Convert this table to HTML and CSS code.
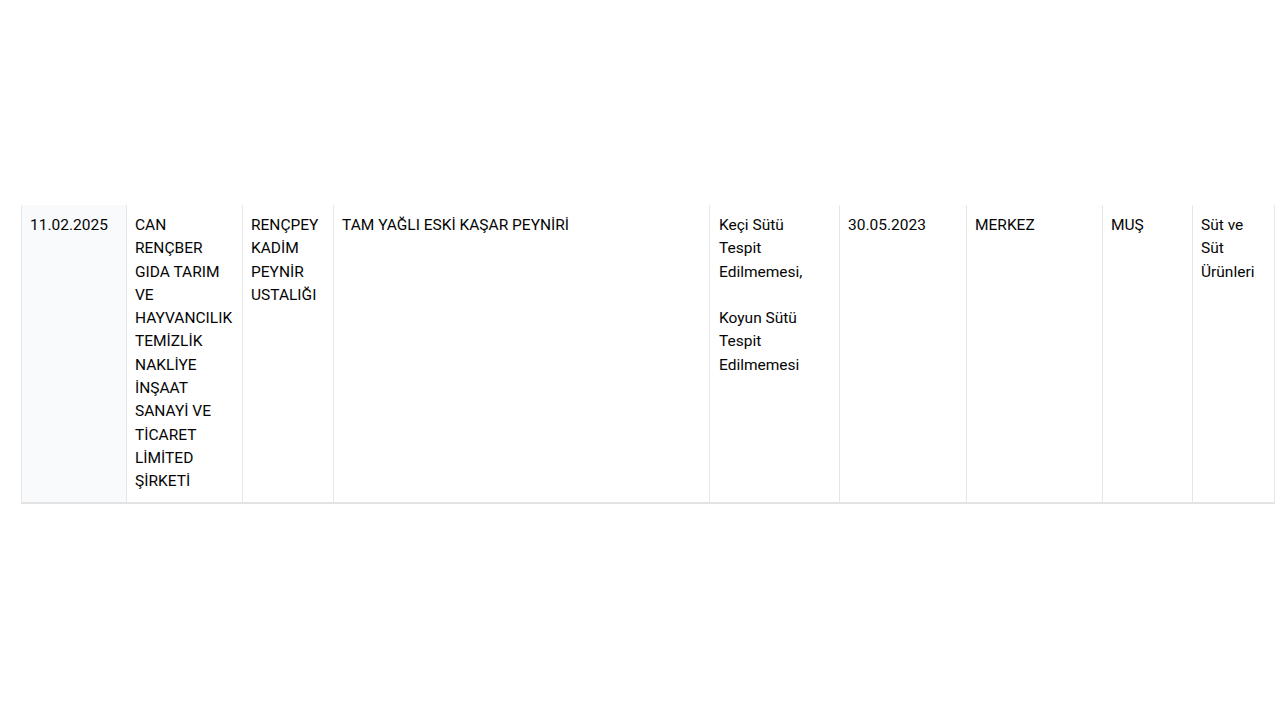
FILE: index.html
```html
<!DOCTYPE html>
<html lang="tr">
<head>
<meta charset="utf-8">
<title>Tablo</title>
<link rel="stylesheet" href="styles.css">
</head>
<body>
<div class="page">
  <div class="table-wrap">
    <table class="data-table">
      <colgroup>
        <col class="c1"><col class="c2"><col class="c3"><col class="c4"><col class="c5"><col class="c6"><col class="c7"><col class="c8"><col class="c9">
      </colgroup>
      <tbody>
        <tr>
          <td class="cell first">11.02.2025</td>
          <td class="cell">CAN RENÇBER GIDA TARIM VE HAYVANCILIK TEMİZLİK NAKLİYE İNŞAAT SANAYİ VE TİCARET LİMİTED ŞİRKETİ</td>
          <td class="cell">RENÇPEY KADİM PEYNİR USTALIĞI</td>
          <td class="cell product">TAM YAĞLI ESKİ KAŞAR PEYNİRİ</td>
          <td class="cell reason">Keçi Sütü Tespit Edilmemesi,

Koyun Sütü Tespit Edilmemesi</td>
          <td class="cell">30.05.2023</td>
          <td class="cell">MERKEZ</td>
          <td class="cell">MUŞ</td>
          <td class="cell">Süt ve Süt Ürünleri</td>
        </tr>
      </tbody>
    </table>
  </div>
</div>
</body>
</html>
```

FILE: styles.css
```css
html, body {
  margin: 0;
  padding: 0;
  background: #ffffff;
}

.page {
  padding: 205px 0 0 21px;
  font-family: Roboto, "Liberation Sans", Arial, sans-serif;
  font-size: 15.5px;
  color: #050505;
}

.table-wrap {
  width: 1253px;
}

.data-table {
  border-collapse: collapse;
  table-layout: fixed;
  width: 1253px;
  border-bottom: 2px solid #e3e3e3;
}

.c1 { width: 105px; }
.c2 { width: 116px; }
.c3 { width: 91px; }
.c4 { width: 376px; }
.c5 { width: 130px; }
.c6 { width: 127px; }
.c7 { width: 136px; }
.c8 { width: 90px; }
.c9 { width: 82px; }

.cell {
  vertical-align: top;
  padding: 9px 8px 8px 8px;
  line-height: 23.3px;
  border-left: 1px solid #e6e6e6;
  border-right: 1px solid #e6e6e6;
  word-wrap: break-word;
  text-align: left;
}

.cell.first {
  background: #f8fafc;
}

.cell.product {
  border-left: 1px solid #cfcfcf;
}

.cell.reason {
  white-space: pre-line;
  padding-left: 9px;
  padding-right: 12px;
}
```
